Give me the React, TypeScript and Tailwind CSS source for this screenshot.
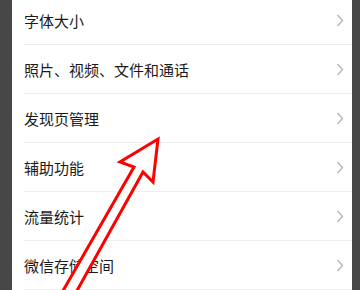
const items = [
  "字体大小",
  "照片、视频、文件和通话",
  "发现页管理",
  "辅助功能",
  "流量统计",
  "微信存储空间",
];

function Chevron() {
  return (
    <svg width="8" height="13" viewBox="0 0 8 13" fill="none">
      <polyline points="1.5,1 6.5,6.5 1.5,12" stroke="#b3b3b3" strokeWidth="1.3" />
    </svg>
  );
}

export default function App() {
  return (
    <div
      className="relative flex h-[290px] w-[360px] overflow-hidden bg-white"
      style={{ fontFamily: '"Noto Sans CJK SC", "Noto Sans", sans-serif' }}
    >
      {/* left dark edge */}
      <div className="w-3 shrink-0 bg-[#474747]" />

      {/* settings list */}
      <div className="flex-1 bg-white">
        <div className="-mt-[4px] ml-3">
          {items.map((label) => (
            <div
              key={label}
              className="flex h-[49px] items-center justify-between border-b border-[#efefef] pr-[8px]"
            >
              <span className="pt-[1px] text-[15px] leading-none text-[#1a1a1a]">{label}</span>
              <Chevron />
            </div>
          ))}
        </div>
      </div>

      {/* right dark edge */}
      <div className="w-2 shrink-0 bg-[#474747]" />

      {/* red annotation arrow */}
      <svg
        className="pointer-events-none absolute left-0 top-0"
        width="360"
        height="290"
        viewBox="0 0 360 290"
      >
        <polygon
          points="158,139 153,182 143,172 74,296 60,296 134,167 120,162"
          fill="white"
          stroke="#ff0000"
          strokeWidth="3"
          strokeLinejoin="miter"
        />
      </svg>
    </div>
  );
}
